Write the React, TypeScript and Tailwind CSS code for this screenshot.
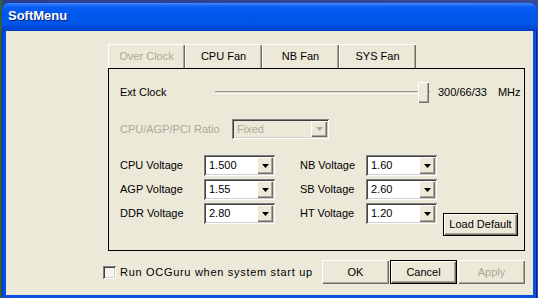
const raised =
  "shadow-[inset_1px_1px_0_#ffffff,inset_-1px_-1px_0_#716f64,inset_-2px_-2px_0_#aca899]";
const sunken =
  "shadow-[inset_1px_1px_0_#808080,inset_-1px_-1px_0_#ffffff,inset_2px_2px_0_#404040,inset_-2px_-2px_0_#d4d0c8]";

function Arrow({ disabled }: { disabled?: boolean }) {
  return (
    <div className={`flex w-[16px] items-center justify-center bg-[#ece9d8] ${raised}`}>
      <svg width="7" height="4" viewBox="0 0 7 4">
        <path d="M0 0h7L3.5 4z" fill={disabled ? "#aca899" : "#000"} />
      </svg>
    </div>
  );
}

function Combo({ value, className, disabled }: { value: string; className: string; disabled?: boolean }) {
  return (
    <div className={`flex p-[2px] ${sunken} ${disabled ? "bg-[#ece9d8]" : "bg-white"} ${className}`}>
      <span className={`flex-1 pl-[3px] leading-[17px] ${disabled ? "text-[#aca899]" : "text-black"}`}>{value}</span>
      <Arrow disabled={disabled} />
    </div>
  );
}

function Button({ label, className, disabled, focused }: { label: string; className: string; disabled?: boolean; focused?: boolean }) {
  return (
    <div className={`${className} ${focused ? "border border-black" : ""}`}>
      <div className={`flex h-full w-full items-center justify-center bg-[#ece9d8] ${raised} ${disabled ? "text-[#aca899]" : "text-black"}`}>
        {label}
      </div>
    </div>
  );
}

const tabs = [
  { label: "Over Clock", disabled: true },
  { label: "CPU Fan" },
  { label: "NB Fan" },
  { label: "SYS Fan" },
];

const left = [
  { label: "CPU Voltage", value: "1.500" },
  { label: "AGP Voltage", value: "1.55" },
  { label: "DDR Voltage", value: "2.80" },
];

const right = [
  { label: "NB Voltage", value: "1.60" },
  { label: "SB Voltage", value: "2.60" },
  { label: "HT Voltage", value: "1.20" },
];

export default function App() {
  return (
    <div className="h-[298px] w-[538px] overflow-hidden bg-[linear-gradient(90deg,#2f6b2a_0px,#2a3f8c_4px,#3b4a9a_100%)] pt-[3px] pl-[2px] font-['Liberation_Sans',Arial,sans-serif] text-[11px] text-black">
      <div className="flex h-[300px] w-[535px] flex-col rounded-t-[7px] bg-[#0a4fdf] shadow-[inset_1px_0_0_#0831d9,inset_-1px_0_0_#001ea0]">
        <div className="flex h-[28px] items-center rounded-t-[7px] bg-[linear-gradient(180deg,#3d8cff_0%,#0a5cf5_14%,#0058ee_35%,#0055e8_75%,#0047d6_92%,#003dc4_100%)] pl-[6px] pb-[2px]">
          <span className="text-[13px] font-bold text-white [text-shadow:1px_1px_0_#0a1e6e]">SoftMenu</span>
        </div>
        <div className="mx-[4px] h-[264px] bg-[#ece9d8] pt-[13px]">
          <div className="ml-[102px] flex h-[24px]">
            {tabs.map((t) => (
              <div
                key={t.label}
                className={`flex w-[77px] items-center justify-center bg-[#ece9d8] shadow-[inset_1px_1px_0_#ffffff,inset_-1px_0_0_#716f64,inset_-2px_0_0_#aca899] ${t.disabled ? "text-[#aca899]" : "text-black"}`}
              >
                {t.label}
              </div>
            ))}
          </div>
          <div className="ml-[102px] h-[183px] w-[417px] border border-black">
            <div className="mt-[13px] flex h-[21px] items-center pl-[11px]">
              <span className="w-[95px]">Ext Clock</span>
              <div className="relative flex h-[21px] w-[215px] items-center">
                <div className="h-[3px] w-full border-t border-[#9d9d92] bg-[#d8d5c6] shadow-[inset_0_-1px_0_#ffffff]" />
                <div className={`absolute top-0 left-[203px] h-[21px] w-[11px] bg-[#ece9d8] ${raised}`} />
              </div>
              <span className="ml-[8px]">300/66/33</span>
              <span className="ml-[11px]">MHz</span>
            </div>
            <div className="mt-[16px] flex h-[20px] items-center pl-[11px]">
              <span className="w-[112px] text-[#aca899]">CPU/AGP/PCI Ratio</span>
              <Combo value="Fixed" disabled className="h-[20px] w-[97px]" />
            </div>
            <div className="mt-[16px] flex pl-[11px]">
              <div className="flex flex-col gap-[3px]">
                {left.map((r) => (
                  <div key={r.label} className="flex h-[21px] items-center">
                    <span className="w-[84px]">{r.label}</span>
                    <Combo value={r.value} className="h-[21px] w-[71px]" />
                  </div>
                ))}
              </div>
              <div className="ml-[25px] flex flex-col gap-[3px]">
                {right.map((r) => (
                  <div key={r.label} className="flex h-[21px] items-center">
                    <span className="w-[66px]">{r.label}</span>
                    <Combo value={r.value} className="h-[21px] w-[71px]" />
                  </div>
                ))}
              </div>
              <Button label="Load Default" focused className="mt-[58px] ml-[6px] h-[23px] w-[75px]" />
            </div>
          </div>
          <div className="mt-[9px] flex h-[24px] items-center pr-[8px] pl-[97px]">
            <div className={`h-[13px] w-[13px] bg-[#f4f3ee] ${sunken}`} />
            <span className="ml-[4px] tracking-[0.7px]">Run OCGuru when system start up</span>
            <div className="ml-auto flex h-[24px] gap-[1px]">
              <Button label="OK" className="h-[24px] w-[67px]" />
              <Button label="Cancel" focused className="h-[24px] w-[67px]" />
              <Button label="Apply" disabled className="h-[24px] w-[67px]" />
            </div>
          </div>
        </div>
      </div>
    </div>
  );
}
